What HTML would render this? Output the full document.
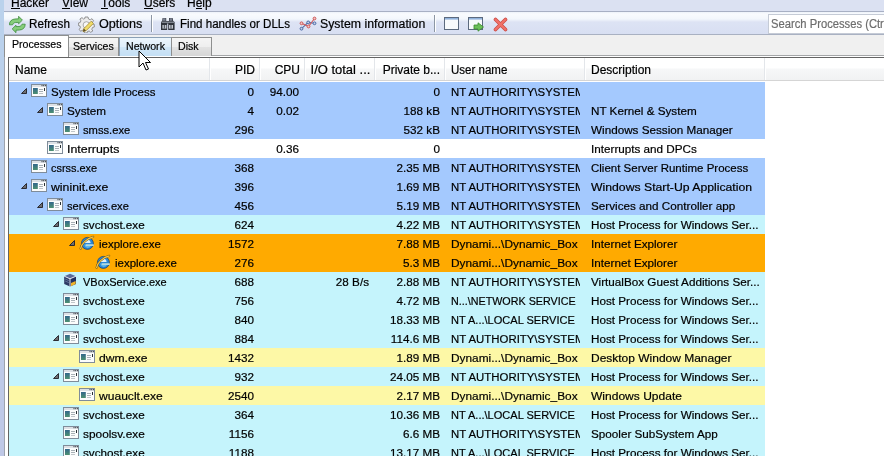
<!DOCTYPE html>
<html><head><meta charset="utf-8"><style>
*{margin:0;padding:0;box-sizing:border-box}
html,body{width:884px;height:456px;overflow:hidden;background:#f0f0f0;font-family:"Liberation Sans",sans-serif;color:#000}
.abs{position:absolute}
#frame{position:absolute;left:0;top:0;width:4px;height:456px;background:linear-gradient(#bad2ec,#bcd0ec 30%,#bfc8e6)}
#menubar{position:absolute;left:4px;top:0;width:880px;height:11px;background:#dbe1f2}
#menubar span{position:absolute;top:-4px;font-size:12px;line-height:14px;color:#000;white-space:nowrap}
#menubar u{text-decoration:none;position:relative}
#menubar u:after{content:'';position:absolute;left:0;right:0;top:12px;height:1px;background:#000}
#tbline{position:absolute;left:4px;top:11px;width:880px;height:1px;background:#a8b0c4}
#toolbar{position:absolute;left:4px;top:12px;width:880px;height:22px;background:linear-gradient(#eef2f9 0px,#f9fbfe 2px,#f3f7fc 7px,#dde3f4 10px,#d8dff2 22px)}
#tbbot{position:absolute;left:4px;top:34px;width:880px;height:1px;background:#a9b1c2}
.tbt{position:absolute;top:17px;font-size:12px;line-height:14px;color:#000;white-space:nowrap}
.sep{position:absolute;top:15px;width:1px;height:17px;background:#8c96a4;box-shadow:1px 0 0 #fff}
#search{position:absolute;left:768px;top:14px;width:120px;height:20px;background:#fff;border:1px solid #c5cbd6;border-right:none}
#search span{position:absolute;left:2px;top:2px;font-size:12px;line-height:14px;color:#6d6d6d;white-space:nowrap;transform:scaleX(0.935);transform-origin:0 0}
#tabarea{position:absolute;left:4px;top:35px;width:880px;height:421px;background:#f0f0f0}
.tab{position:absolute;top:37px;height:19px;border:1px solid #8e8f8f;border-bottom:none;background:linear-gradient(#f5f5f5,#eeeeee 50%,#e2e2e2 51%,#d6d6d6);font-size:11px;line-height:14px}
.tab span{position:absolute;top:2px;white-space:nowrap;font-size:11.8px;transform:scaleX(0.9);transform-origin:0 0}
.tab.sel{top:35px;height:22px;background:#fff;z-index:3}
.tab.hov{background:linear-gradient(#ecf5fc,#dfeefa 50%,#d0e6f7 51%,#c4dff4);border-color:#8aa0b6}
#pageline{position:absolute;left:4px;top:55px;width:880px;height:1px;background:#a4a6a8}
#page{position:absolute;left:5px;top:56px;width:879px;height:400px;background:#fff}
#pageleft{position:absolute;left:4px;top:55px;width:1px;height:401px;background:#9ea4ae}
#lv{position:absolute;left:8px;top:57px;width:880px;height:400px;border-left:1px solid #646464;border-top:1px solid #646464;background:#fff}
#hdr{position:absolute;left:9px;top:58px;width:875px;height:23px;background:linear-gradient(#ffffff 0,#ffffff 10px,#f6f7f8 11px,#f1f2f3 22px);border-bottom:1px solid #d5d5d5}
.hs{position:absolute;top:58px;width:1px;height:22px;background:#e3e6ea;box-shadow:1px 0 0 #fff}
.ht{position:absolute;top:64px;font-size:12px;line-height:13px;white-space:nowrap;color:#000}
.row{position:absolute;left:9px;width:756px;height:19px}
.row .t{position:absolute;top:3px;font-size:11.7px;line-height:14px;white-space:nowrap;color:#000}
.row .t.user{width:129px;overflow:hidden}
.row .icw{position:absolute;line-height:0}
.exp{position:absolute;top:5px}
#cursor{position:absolute;left:138px;top:50px;z-index:10}
#root div,#menubar span{-webkit-text-stroke:0.2px currentColor}
#root{position:absolute;left:0;top:0;width:884px;height:456px;overflow:hidden;filter:blur(0.3px)}
</style></head>
<body>
<div id="root">
<svg width="0" height="0" style="position:absolute"><defs><linearGradient id="tg" x1="0" y1="0" x2="0" y2="1"><stop offset="0" stop-color="#33678c"/><stop offset="1" stop-color="#4c9070"/></linearGradient></defs></svg>
<div id="frame"></div>
<div id="menubar"><span style="left:7px"><u>H</u>acker</span><span style="left:58px"><u>V</u>iew</span><span style="left:97px"><u>T</u>ools</span><span style="left:140px"><u>U</u>sers</span><span style="left:183px">H<u>e</u>lp</span></div>
<div id="tbline"></div>
<div id="toolbar"></div>
<div id="tbbot"></div>
<svg class="abs" style="left:9px;top:16px" width="18" height="18" viewBox="0 0 18 18"><path d="M0.4 8.8 C0.4 5.2 2.8 3.2 6 3.0 L9.6 2.8 L9.6 0.3 L13.4 4.1 L9.6 7.8 L9.6 6.4 L6.6 6.5 C5 6.6 4.2 7.4 3.6 8.8 Z" fill="#86ce7a" stroke="#3e8c3c" stroke-width="0.8" stroke-linejoin="round"/><path d="M16.2 8.2 C16.2 11.8 13.8 13.8 10.6 14 L7 14.2 L7 16.7 L3.2 12.9 L7 9.2 L7 10.6 L10 10.5 C11.6 10.4 12.4 9.6 13 8.2 Z" fill="#86ce7a" stroke="#3e8c3c" stroke-width="0.8" stroke-linejoin="round"/></svg><div class="tbt" style="left:29px;transform:scaleX(0.975);transform-origin:0 0">Refresh</div>
<svg class="abs" style="left:78px;top:16px" width="17" height="17" viewBox="0 0 17 17"><path d="M7 1 H10 L10.5 3 L12.3 3.8 L14 2.7 L15.6 4.8 L14.2 6.3 L14.6 8 L16.3 8.5 V11 L14.5 11.5 L13.8 13.3 L14.8 15 L12.6 16.3 L11.2 15 L9.5 15.5 L9 17 H6.5 L6 15 L4.3 14.3 L2.6 15.3 L1.2 13.3 L2.4 11.8 L2 10 L0.4 9.5 V7 L2.2 6.5 L2.9 4.8 L1.9 3 L4 1.6 L5.5 3 L6.8 2.5 Z" fill="#ececec" stroke="#7e7e7e" stroke-width="0.8"/><circle cx="8.4" cy="9" r="3.3" fill="#f8f8f8" stroke="#8a8a8a" stroke-width="0.7"/><path d="M5 15.6 L5.8 12.6 L13.2 5.2 L15.4 7.4 L8 14.8 Z" fill="#f0dc6a" stroke="#9c8020" stroke-width="0.7" stroke-linejoin="round"/><path d="M5 15.6 L5.8 12.6 L8 14.8 Z" fill="#5a4a2a"/></svg><div class="tbt" style="left:99px;transform:scaleX(1.05);transform-origin:0 0">Options</div>
<div class="sep" style="left:151px"></div>
<svg class="abs" style="left:160px;top:17px" width="16" height="14" viewBox="0 0 16 14"><path d="M2.6 1 H6.2 V4 H9 V1 H12.6 L13.2 4 L14.6 5 V13 H8.2 V6.5 H7.2 V13 H1 V5 L2.2 4 Z" fill="#30343c"/><rect x="3" y="1.2" width="2.6" height="2.6" fill="#7a8090"/><rect x="9.6" y="1.2" width="2.6" height="2.6" fill="#7a8090"/><rect x="1.6" y="4.6" width="12.4" height="1.3" fill="#8a909a"/><rect x="2.4" y="8" width="4" height="3.6" fill="#c4c8d0"/><rect x="9" y="8" width="4" height="3.6" fill="#c4c8d0"/><rect x="3.8" y="8" width="1.2" height="3.6" fill="#5a606a"/><rect x="10.4" y="8" width="1.2" height="3.6" fill="#5a606a"/></svg><div class="tbt" style="left:180px;transform:scaleX(0.965);transform-origin:0 0">Find handles or DLLs</div>
<svg class="abs" style="left:299px;top:16px" width="18" height="15" viewBox="0 0 18 15"><path d="M2.5 12.7 L9.2 6.4 L15.5 7.3" stroke="#5070aa" stroke-width="1.1" fill="none"/><path d="M2.5 7.3 L9.5 10.5 L15.5 2.5" stroke="#d25c5c" stroke-width="1.1" fill="none"/><circle cx="2.5" cy="12.7" r="1.4" fill="#c8d4ea" stroke="#4a68a4" stroke-width="1"/><circle cx="9.2" cy="6.4" r="1.4" fill="#c8d4ea" stroke="#4a68a4" stroke-width="1"/><circle cx="15.5" cy="7.3" r="1.4" fill="#c8d4ea" stroke="#4a68a4" stroke-width="1"/><circle cx="2.5" cy="7.3" r="1.4" fill="#f0c8c8" stroke="#d05858" stroke-width="1"/><circle cx="9.5" cy="10.5" r="1.4" fill="#f0c8c8" stroke="#d05858" stroke-width="1"/><circle cx="15.5" cy="2.5" r="1.4" fill="#f0c8c8" stroke="#d05858" stroke-width="1"/></svg><div class="tbt" style="left:320px;transform:scaleX(1.025);transform-origin:0 0">System information</div>
<div class="sep" style="left:434px"></div>
<svg class="abs" style="left:444px;top:17px" width="16" height="14" viewBox="0 0 16 14"><rect x="0.5" y="0.5" width="14" height="12" fill="#f8fafc" stroke="#5c6a7e"/><rect x="1" y="1" width="13" height="1.6" fill="#90b2dc"/></svg><svg class="abs" style="left:468px;top:17px" width="17" height="16" viewBox="0 0 17 16"><rect x="0.5" y="0.5" width="14" height="12" fill="#f8fafc" stroke="#5c6a7e"/><rect x="1" y="1" width="13" height="1.6" fill="#90b2dc"/><path d="M6 8 H10 V5.8 L15.5 10 L10 14.2 V12 H6 Z" fill="#6cbf5a" stroke="#3a8a2c" stroke-width="0.8" stroke-linejoin="round"/></svg><svg class="abs" style="left:493px;top:17px" width="15" height="15" viewBox="0 0 15 15"><path d="M2.5 2.5 L12.5 12.5 M12.5 2.5 L2.5 12.5" stroke="#c84a44" stroke-width="3.6" stroke-linecap="round"/><path d="M2.5 2.5 L12.5 12.5 M12.5 2.5 L2.5 12.5" stroke="#f07068" stroke-width="2.4" stroke-linecap="round"/></svg>
<div id="search"><span>Search Processes (Ctrl+K)</span></div>
<div id="tabarea"></div>
<div id="pageline"></div>
<div id="page"></div><div id="pageleft"></div>
<div class="tab sel" style="left:4px;width:65px"><span style="left:7px;top:1px">Processes</span></div><div class="tab" style="left:68px;width:51px"><span style="left:4px;top:1px">Services</span></div><div class="tab hov" style="left:119px;width:53px"><span style="left:6px;top:1px">Network</span></div><div class="tab" style="left:171px;width:41px"><span style="left:6px;top:1px">Disk</span></div>
<div id="lv"></div>
<div id="hdr"></div>
<div class="hs" style="left:209px"></div><div class="hs" style="left:259px"></div><div class="hs" style="left:304px"></div><div class="hs" style="left:374px"></div><div class="hs" style="left:444px"></div><div class="hs" style="left:584px"></div><div class="hs" style="left:764px"></div>
<div class="ht" style="left:15px">Name</div><div class="ht" style="right:629px">PID</div><div class="ht" style="right:584px">CPU</div><div class="ht" style="right:514px;transform:scaleX(1.08);transform-origin:100% 0">I/O total ...</div><div class="ht" style="right:444px">Private b...</div><div class="ht" style="left:451px;transform:scaleX(0.96);transform-origin:0 0">User name</div><div class="ht" style="left:591px">Description</div>
<div class="row" style="top:82px;background:#a4c9fe"><svg class="exp" style="left:11px" width="8" height="8" viewBox="0 0 8 8"><path d="M6.5 1.5 L6.5 6.5 L1.5 6.5 Z" fill="#6e6e72" stroke="#26262c" stroke-width="0.95" stroke-linejoin="round"/></svg><div class="icw" style="left:22px;top:2px"><svg class="ic" width="16" height="14" viewBox="0 0 16 14"><rect x="0.5" y="0.5" width="15" height="12" fill="#fbfcfc" stroke="#7f8c9a"/><rect x="1" y="1" width="14" height="2" fill="#dde1e6"/><rect x="10.5" y="1" width="1" height="1.2" fill="#40464c"/><rect x="12.2" y="1" width="1" height="1.2" fill="#40464c"/><rect x="13.9" y="1" width="1" height="1.2" fill="#40464c"/><rect x="2" y="4" width="4.8" height="6" fill="url(#tg)"/><rect x="8" y="5" width="4" height="1" fill="#a8b0b6"/><rect x="8" y="7" width="4" height="1" fill="#a8b0b6"/><rect x="8" y="9" width="4" height="1" fill="#c0c6ca"/><rect x="13" y="4" width="1" height="3" fill="#2a3236"/></svg></div><div class="t" style="left:42px;transform:scaleX(0.98);transform-origin:0 0">System Idle Process</div><div class="t r" style="right:511px">0</div><div class="t r" style="right:466px">94.00</div><div class="t r" style="right:325px">0</div><div class="t user" style="left:442px"><span style="display:inline-block;transform:scaleX(0.975);transform-origin:0 0">NT AUTHORITY\SYSTEM</span></div></div>
<div class="row" style="top:101px;background:#a4c9fe"><svg class="exp" style="left:27px" width="8" height="8" viewBox="0 0 8 8"><path d="M6.5 1.5 L6.5 6.5 L1.5 6.5 Z" fill="#6e6e72" stroke="#26262c" stroke-width="0.95" stroke-linejoin="round"/></svg><div class="icw" style="left:38px;top:2px"><svg class="ic" width="16" height="14" viewBox="0 0 16 14"><rect x="0.5" y="0.5" width="15" height="12" fill="#fbfcfc" stroke="#7f8c9a"/><rect x="1" y="1" width="14" height="2" fill="#dde1e6"/><rect x="10.5" y="1" width="1" height="1.2" fill="#40464c"/><rect x="12.2" y="1" width="1" height="1.2" fill="#40464c"/><rect x="13.9" y="1" width="1" height="1.2" fill="#40464c"/><rect x="2" y="4" width="4.8" height="6" fill="url(#tg)"/><rect x="8" y="5" width="4" height="1" fill="#a8b0b6"/><rect x="8" y="7" width="4" height="1" fill="#a8b0b6"/><rect x="8" y="9" width="4" height="1" fill="#c0c6ca"/><rect x="13" y="4" width="1" height="3" fill="#2a3236"/></svg></div><div class="t" style="left:58px;transform:scaleX(1.0);transform-origin:0 0">System</div><div class="t r" style="right:511px">4</div><div class="t r" style="right:466px">0.02</div><div class="t r" style="right:325px">188 kB</div><div class="t user" style="left:442px"><span style="display:inline-block;transform:scaleX(0.975);transform-origin:0 0">NT AUTHORITY\SYSTEM</span></div><div class="t" style="left:582px">NT Kernel &amp; System</div></div>
<div class="row" style="top:120px;background:#a4c9fe"><div class="icw" style="left:54px;top:2px"><svg class="ic" width="16" height="14" viewBox="0 0 16 14"><rect x="0.5" y="0.5" width="15" height="12" fill="#fbfcfc" stroke="#7f8c9a"/><rect x="1" y="1" width="14" height="2" fill="#dde1e6"/><rect x="10.5" y="1" width="1" height="1.2" fill="#40464c"/><rect x="12.2" y="1" width="1" height="1.2" fill="#40464c"/><rect x="13.9" y="1" width="1" height="1.2" fill="#40464c"/><rect x="2" y="4" width="4.8" height="6" fill="url(#tg)"/><rect x="8" y="5" width="4" height="1" fill="#a8b0b6"/><rect x="8" y="7" width="4" height="1" fill="#a8b0b6"/><rect x="8" y="9" width="4" height="1" fill="#c0c6ca"/><rect x="13" y="4" width="1" height="3" fill="#2a3236"/></svg></div><div class="t" style="left:74px;transform:scaleX(0.957);transform-origin:0 0">smss.exe</div><div class="t r" style="right:511px">296</div><div class="t r" style="right:325px">532 kB</div><div class="t user" style="left:442px"><span style="display:inline-block;transform:scaleX(0.975);transform-origin:0 0">NT AUTHORITY\SYSTEM</span></div><div class="t" style="left:582px">Windows Session Manager</div></div>
<div class="row" style="top:139px;background:#ffffff"><div class="icw" style="left:38px;top:2px"><svg class="ic" width="16" height="14" viewBox="0 0 16 14"><rect x="0.5" y="0.5" width="15" height="12" fill="#fbfcfc" stroke="#7f8c9a"/><rect x="1" y="1" width="14" height="2" fill="#dde1e6"/><rect x="10.5" y="1" width="1" height="1.2" fill="#40464c"/><rect x="12.2" y="1" width="1" height="1.2" fill="#40464c"/><rect x="13.9" y="1" width="1" height="1.2" fill="#40464c"/><rect x="2" y="4" width="4.8" height="6" fill="url(#tg)"/><rect x="8" y="5" width="4" height="1" fill="#a8b0b6"/><rect x="8" y="7" width="4" height="1" fill="#a8b0b6"/><rect x="8" y="9" width="4" height="1" fill="#c0c6ca"/><rect x="13" y="4" width="1" height="3" fill="#2a3236"/></svg></div><div class="t" style="left:58px;transform:scaleX(1.06);transform-origin:0 0">Interrupts</div><div class="t r" style="right:466px">0.36</div><div class="t r" style="right:325px">0</div><div class="t" style="left:582px">Interrupts and DPCs</div></div>
<div class="row" style="top:158px;background:#a4c9fe"><div class="icw" style="left:22px;top:2px"><svg class="ic" width="16" height="14" viewBox="0 0 16 14"><rect x="0.5" y="0.5" width="15" height="12" fill="#fbfcfc" stroke="#7f8c9a"/><rect x="1" y="1" width="14" height="2" fill="#dde1e6"/><rect x="10.5" y="1" width="1" height="1.2" fill="#40464c"/><rect x="12.2" y="1" width="1" height="1.2" fill="#40464c"/><rect x="13.9" y="1" width="1" height="1.2" fill="#40464c"/><rect x="2" y="4" width="4.8" height="6" fill="url(#tg)"/><rect x="8" y="5" width="4" height="1" fill="#a8b0b6"/><rect x="8" y="7" width="4" height="1" fill="#a8b0b6"/><rect x="8" y="9" width="4" height="1" fill="#c0c6ca"/><rect x="13" y="4" width="1" height="3" fill="#2a3236"/></svg></div><div class="t" style="left:42px;transform:scaleX(0.935);transform-origin:0 0">csrss.exe</div><div class="t r" style="right:511px">368</div><div class="t r" style="right:325px">2.35 MB</div><div class="t user" style="left:442px"><span style="display:inline-block;transform:scaleX(0.975);transform-origin:0 0">NT AUTHORITY\SYSTEM</span></div><div class="t" style="left:582px;transform:scaleX(0.984);transform-origin:0 0">Client Server Runtime Process</div></div>
<div class="row" style="top:177px;background:#a4c9fe"><svg class="exp" style="left:11px" width="8" height="8" viewBox="0 0 8 8"><path d="M6.5 1.5 L6.5 6.5 L1.5 6.5 Z" fill="#6e6e72" stroke="#26262c" stroke-width="0.95" stroke-linejoin="round"/></svg><div class="icw" style="left:22px;top:2px"><svg class="ic" width="16" height="14" viewBox="0 0 16 14"><rect x="0.5" y="0.5" width="15" height="12" fill="#fbfcfc" stroke="#7f8c9a"/><rect x="1" y="1" width="14" height="2" fill="#dde1e6"/><rect x="10.5" y="1" width="1" height="1.2" fill="#40464c"/><rect x="12.2" y="1" width="1" height="1.2" fill="#40464c"/><rect x="13.9" y="1" width="1" height="1.2" fill="#40464c"/><rect x="2" y="4" width="4.8" height="6" fill="url(#tg)"/><rect x="8" y="5" width="4" height="1" fill="#a8b0b6"/><rect x="8" y="7" width="4" height="1" fill="#a8b0b6"/><rect x="8" y="9" width="4" height="1" fill="#c0c6ca"/><rect x="13" y="4" width="1" height="3" fill="#2a3236"/></svg></div><div class="t" style="left:42px;transform:scaleX(1.05);transform-origin:0 0">wininit.exe</div><div class="t r" style="right:511px">396</div><div class="t r" style="right:325px">1.69 MB</div><div class="t user" style="left:442px"><span style="display:inline-block;transform:scaleX(0.975);transform-origin:0 0">NT AUTHORITY\SYSTEM</span></div><div class="t" style="left:582px;transform:scaleX(1.046);transform-origin:0 0">Windows Start-Up Application</div></div>
<div class="row" style="top:196px;background:#a4c9fe"><svg class="exp" style="left:27px" width="8" height="8" viewBox="0 0 8 8"><path d="M6.5 1.5 L6.5 6.5 L1.5 6.5 Z" fill="#6e6e72" stroke="#26262c" stroke-width="0.95" stroke-linejoin="round"/></svg><div class="icw" style="left:38px;top:2px"><svg class="ic" width="16" height="14" viewBox="0 0 16 14"><rect x="0.5" y="0.5" width="15" height="12" fill="#fbfcfc" stroke="#7f8c9a"/><rect x="1" y="1" width="14" height="2" fill="#dde1e6"/><rect x="10.5" y="1" width="1" height="1.2" fill="#40464c"/><rect x="12.2" y="1" width="1" height="1.2" fill="#40464c"/><rect x="13.9" y="1" width="1" height="1.2" fill="#40464c"/><rect x="2" y="4" width="4.8" height="6" fill="url(#tg)"/><rect x="8" y="5" width="4" height="1" fill="#a8b0b6"/><rect x="8" y="7" width="4" height="1" fill="#a8b0b6"/><rect x="8" y="9" width="4" height="1" fill="#c0c6ca"/><rect x="13" y="4" width="1" height="3" fill="#2a3236"/></svg></div><div class="t" style="left:58px;transform:scaleX(0.952);transform-origin:0 0">services.exe</div><div class="t r" style="right:511px">456</div><div class="t r" style="right:325px">5.19 MB</div><div class="t user" style="left:442px"><span style="display:inline-block;transform:scaleX(0.975);transform-origin:0 0">NT AUTHORITY\SYSTEM</span></div><div class="t" style="left:582px">Services and Controller app</div></div>
<div class="row" style="top:215px;background:#c5f4fc"><svg class="exp" style="left:43px" width="8" height="8" viewBox="0 0 8 8"><path d="M6.5 1.5 L6.5 6.5 L1.5 6.5 Z" fill="#6e6e72" stroke="#26262c" stroke-width="0.95" stroke-linejoin="round"/></svg><div class="icw" style="left:54px;top:2px"><svg class="ic" width="16" height="14" viewBox="0 0 16 14"><rect x="0.5" y="0.5" width="15" height="12" fill="#fbfcfc" stroke="#7f8c9a"/><rect x="1" y="1" width="14" height="2" fill="#dde1e6"/><rect x="10.5" y="1" width="1" height="1.2" fill="#40464c"/><rect x="12.2" y="1" width="1" height="1.2" fill="#40464c"/><rect x="13.9" y="1" width="1" height="1.2" fill="#40464c"/><rect x="2" y="4" width="4.8" height="6" fill="url(#tg)"/><rect x="8" y="5" width="4" height="1" fill="#a8b0b6"/><rect x="8" y="7" width="4" height="1" fill="#a8b0b6"/><rect x="8" y="9" width="4" height="1" fill="#c0c6ca"/><rect x="13" y="4" width="1" height="3" fill="#2a3236"/></svg></div><div class="t" style="left:74px;transform:scaleX(1.0);transform-origin:0 0">svchost.exe</div><div class="t r" style="right:511px">624</div><div class="t r" style="right:325px">4.22 MB</div><div class="t user" style="left:442px"><span style="display:inline-block;transform:scaleX(0.975);transform-origin:0 0">NT AUTHORITY\SYSTEM</span></div><div class="t" style="left:582px">Host Process for Windows Ser...</div></div>
<div class="row" style="top:234px;background:#ffaa00"><svg class="exp" style="left:59px" width="8" height="8" viewBox="0 0 8 8"><path d="M6.5 1.5 L6.5 6.5 L1.5 6.5 Z" fill="#6e6e72" stroke="#26262c" stroke-width="0.95" stroke-linejoin="round"/></svg><div class="icw" style="left:70px;top:1px"><svg class="ic" width="16" height="16" viewBox="0 0 16 16"><circle cx="8.4" cy="8.4" r="6" fill="#2a88d8" stroke="#123c6c" stroke-width="0.7"/><path d="M5.3 7.9 C5.5 5.8 6.8 4.7 8.5 4.7 C10.2 4.7 11.4 5.8 11.6 7.9 Z" fill="#dff0f8"/><path d="M5.4 9.6 L14.6 9.6 L14.6 11 L11.6 11 C11 12.4 9.8 12.9 8.6 12.9 C7 12.9 5.8 11.8 5.4 9.6 Z" fill="#5cb8ee"/><rect x="6.8" y="9.5" width="8" height="1.1" fill="#e8eed8"/><path d="M1.6 13.6 C2.2 9 7.6 3.4 14.2 1.8" stroke="#6a5018" stroke-width="2.1" fill="none" stroke-linecap="round"/><path d="M1.6 13.6 C2.2 9 7.6 3.4 14.2 1.8" stroke="#f4c848" stroke-width="1.2" fill="none" stroke-linecap="round"/></svg></div><div class="t" style="left:90px;transform:scaleX(0.98);transform-origin:0 0">iexplore.exe</div><div class="t r" style="right:511px">1572</div><div class="t r" style="right:325px">7.88 MB</div><div class="t user" style="left:442px"><span style="display:inline-block;transform:scaleX(1.015);transform-origin:0 0">Dynami...\Dynamic_Box</span></div><div class="t" style="left:582px">Internet Explorer</div></div>
<div class="row" style="top:253px;background:#ffaa00"><div class="icw" style="left:86px;top:1px"><svg class="ic" width="16" height="16" viewBox="0 0 16 16"><circle cx="8.4" cy="8.4" r="6" fill="#2a88d8" stroke="#123c6c" stroke-width="0.7"/><path d="M5.3 7.9 C5.5 5.8 6.8 4.7 8.5 4.7 C10.2 4.7 11.4 5.8 11.6 7.9 Z" fill="#dff0f8"/><path d="M5.4 9.6 L14.6 9.6 L14.6 11 L11.6 11 C11 12.4 9.8 12.9 8.6 12.9 C7 12.9 5.8 11.8 5.4 9.6 Z" fill="#5cb8ee"/><rect x="6.8" y="9.5" width="8" height="1.1" fill="#e8eed8"/><path d="M1.6 13.6 C2.2 9 7.6 3.4 14.2 1.8" stroke="#6a5018" stroke-width="2.1" fill="none" stroke-linecap="round"/><path d="M1.6 13.6 C2.2 9 7.6 3.4 14.2 1.8" stroke="#f4c848" stroke-width="1.2" fill="none" stroke-linecap="round"/></svg></div><div class="t" style="left:106px;transform:scaleX(0.98);transform-origin:0 0">iexplore.exe</div><div class="t r" style="right:511px">276</div><div class="t r" style="right:325px">5.3 MB</div><div class="t user" style="left:442px"><span style="display:inline-block;transform:scaleX(1.015);transform-origin:0 0">Dynami...\Dynamic_Box</span></div><div class="t" style="left:582px">Internet Explorer</div></div>
<div class="row" style="top:272px;background:#c5f4fc"><div class="icw" style="left:54px;top:1px"><svg class="ic" width="16" height="16" viewBox="0 0 16 16"><path d="M7 0.8 L13 3.2 L7 5.8 L1.2 3.2 Z" fill="#5b6b9a"/><path d="M1.2 3.2 L7 5.8 L7 13.6 L1.2 11 Z" fill="#2c3a64"/><path d="M7 5.8 L13 3.2 L13 11 L7 13.6 Z" fill="#223060"/><path d="M8 10 L12.6 8 L12.6 11 L8 13.2 Z" fill="#f0b428"/><path d="M1.2 3.2 L7 5.8 L13 3.2 M7 5.8 L7 13.6" stroke="#eef2fa" stroke-width="0.9" fill="none"/><path d="M2.2 6 L5.8 7.6 M2.2 8 L5.8 9.6" stroke="#8898c0" stroke-width="0.6" fill="none"/></svg></div><div class="t" style="left:74px;transform:scaleX(0.94);transform-origin:0 0">VBoxService.exe</div><div class="t r" style="right:511px">688</div><div class="t r" style="right:396px">28 B/s</div><div class="t r" style="right:325px">2.88 MB</div><div class="t user" style="left:442px"><span style="display:inline-block;transform:scaleX(0.975);transform-origin:0 0">NT AUTHORITY\SYSTEM</span></div><div class="t" style="left:582px">VirtualBox Guest Additions Ser...</div></div>
<div class="row" style="top:291px;background:#c5f4fc"><div class="icw" style="left:54px;top:2px"><svg class="ic" width="16" height="14" viewBox="0 0 16 14"><rect x="0.5" y="0.5" width="15" height="12" fill="#fbfcfc" stroke="#7f8c9a"/><rect x="1" y="1" width="14" height="2" fill="#dde1e6"/><rect x="10.5" y="1" width="1" height="1.2" fill="#40464c"/><rect x="12.2" y="1" width="1" height="1.2" fill="#40464c"/><rect x="13.9" y="1" width="1" height="1.2" fill="#40464c"/><rect x="2" y="4" width="4.8" height="6" fill="url(#tg)"/><rect x="8" y="5" width="4" height="1" fill="#a8b0b6"/><rect x="8" y="7" width="4" height="1" fill="#a8b0b6"/><rect x="8" y="9" width="4" height="1" fill="#c0c6ca"/><rect x="13" y="4" width="1" height="3" fill="#2a3236"/></svg></div><div class="t" style="left:74px;transform:scaleX(1.0);transform-origin:0 0">svchost.exe</div><div class="t r" style="right:511px">756</div><div class="t r" style="right:325px">4.72 MB</div><div class="t user" style="left:442px"><span style="display:inline-block;transform:scaleX(0.92);transform-origin:0 0">N...\NETWORK SERVICE</span></div><div class="t" style="left:582px">Host Process for Windows Ser...</div></div>
<div class="row" style="top:310px;background:#c5f4fc"><div class="icw" style="left:54px;top:2px"><svg class="ic" width="16" height="14" viewBox="0 0 16 14"><rect x="0.5" y="0.5" width="15" height="12" fill="#fbfcfc" stroke="#7f8c9a"/><rect x="1" y="1" width="14" height="2" fill="#dde1e6"/><rect x="10.5" y="1" width="1" height="1.2" fill="#40464c"/><rect x="12.2" y="1" width="1" height="1.2" fill="#40464c"/><rect x="13.9" y="1" width="1" height="1.2" fill="#40464c"/><rect x="2" y="4" width="4.8" height="6" fill="url(#tg)"/><rect x="8" y="5" width="4" height="1" fill="#a8b0b6"/><rect x="8" y="7" width="4" height="1" fill="#a8b0b6"/><rect x="8" y="9" width="4" height="1" fill="#c0c6ca"/><rect x="13" y="4" width="1" height="3" fill="#2a3236"/></svg></div><div class="t" style="left:74px;transform:scaleX(1.0);transform-origin:0 0">svchost.exe</div><div class="t r" style="right:511px">840</div><div class="t r" style="right:325px">18.33 MB</div><div class="t user" style="left:442px"><span style="display:inline-block;transform:scaleX(0.945);transform-origin:0 0">NT A...\LOCAL SERVICE</span></div><div class="t" style="left:582px">Host Process for Windows Ser...</div></div>
<div class="row" style="top:329px;background:#c5f4fc"><svg class="exp" style="left:43px" width="8" height="8" viewBox="0 0 8 8"><path d="M6.5 1.5 L6.5 6.5 L1.5 6.5 Z" fill="#6e6e72" stroke="#26262c" stroke-width="0.95" stroke-linejoin="round"/></svg><div class="icw" style="left:54px;top:2px"><svg class="ic" width="16" height="14" viewBox="0 0 16 14"><rect x="0.5" y="0.5" width="15" height="12" fill="#fbfcfc" stroke="#7f8c9a"/><rect x="1" y="1" width="14" height="2" fill="#dde1e6"/><rect x="10.5" y="1" width="1" height="1.2" fill="#40464c"/><rect x="12.2" y="1" width="1" height="1.2" fill="#40464c"/><rect x="13.9" y="1" width="1" height="1.2" fill="#40464c"/><rect x="2" y="4" width="4.8" height="6" fill="url(#tg)"/><rect x="8" y="5" width="4" height="1" fill="#a8b0b6"/><rect x="8" y="7" width="4" height="1" fill="#a8b0b6"/><rect x="8" y="9" width="4" height="1" fill="#c0c6ca"/><rect x="13" y="4" width="1" height="3" fill="#2a3236"/></svg></div><div class="t" style="left:74px;transform:scaleX(1.0);transform-origin:0 0">svchost.exe</div><div class="t r" style="right:511px">884</div><div class="t r" style="right:325px">114.6 MB</div><div class="t user" style="left:442px"><span style="display:inline-block;transform:scaleX(0.975);transform-origin:0 0">NT AUTHORITY\SYSTEM</span></div><div class="t" style="left:582px">Host Process for Windows Ser...</div></div>
<div class="row" style="top:348px;background:#fdf8a6"><div class="icw" style="left:70px;top:2px"><svg class="ic" width="16" height="14" viewBox="0 0 16 14"><rect x="0.5" y="0.5" width="15" height="12" fill="#fbfcfc" stroke="#7f8c9a"/><rect x="1" y="1" width="14" height="2" fill="#dde1e6"/><rect x="10.5" y="1" width="1" height="1.2" fill="#40464c"/><rect x="12.2" y="1" width="1" height="1.2" fill="#40464c"/><rect x="13.9" y="1" width="1" height="1.2" fill="#40464c"/><rect x="2" y="4" width="4.8" height="6" fill="url(#tg)"/><rect x="8" y="5" width="4" height="1" fill="#a8b0b6"/><rect x="8" y="7" width="4" height="1" fill="#a8b0b6"/><rect x="8" y="9" width="4" height="1" fill="#c0c6ca"/><rect x="13" y="4" width="1" height="3" fill="#2a3236"/></svg></div><div class="t" style="left:90px;transform:scaleX(1.036);transform-origin:0 0">dwm.exe</div><div class="t r" style="right:511px">1432</div><div class="t r" style="right:325px">1.89 MB</div><div class="t user" style="left:442px"><span style="display:inline-block;transform:scaleX(1.015);transform-origin:0 0">Dynami...\Dynamic_Box</span></div><div class="t" style="left:582px;transform:scaleX(1.025);transform-origin:0 0">Desktop Window Manager</div></div>
<div class="row" style="top:367px;background:#c5f4fc"><svg class="exp" style="left:43px" width="8" height="8" viewBox="0 0 8 8"><path d="M6.5 1.5 L6.5 6.5 L1.5 6.5 Z" fill="#6e6e72" stroke="#26262c" stroke-width="0.95" stroke-linejoin="round"/></svg><div class="icw" style="left:54px;top:2px"><svg class="ic" width="16" height="14" viewBox="0 0 16 14"><rect x="0.5" y="0.5" width="15" height="12" fill="#fbfcfc" stroke="#7f8c9a"/><rect x="1" y="1" width="14" height="2" fill="#dde1e6"/><rect x="10.5" y="1" width="1" height="1.2" fill="#40464c"/><rect x="12.2" y="1" width="1" height="1.2" fill="#40464c"/><rect x="13.9" y="1" width="1" height="1.2" fill="#40464c"/><rect x="2" y="4" width="4.8" height="6" fill="url(#tg)"/><rect x="8" y="5" width="4" height="1" fill="#a8b0b6"/><rect x="8" y="7" width="4" height="1" fill="#a8b0b6"/><rect x="8" y="9" width="4" height="1" fill="#c0c6ca"/><rect x="13" y="4" width="1" height="3" fill="#2a3236"/></svg></div><div class="t" style="left:74px;transform:scaleX(1.0);transform-origin:0 0">svchost.exe</div><div class="t r" style="right:511px">932</div><div class="t r" style="right:325px">24.05 MB</div><div class="t user" style="left:442px"><span style="display:inline-block;transform:scaleX(0.975);transform-origin:0 0">NT AUTHORITY\SYSTEM</span></div><div class="t" style="left:582px">Host Process for Windows Ser...</div></div>
<div class="row" style="top:386px;background:#fdf8a6"><div class="icw" style="left:70px;top:2px"><svg class="ic" width="16" height="14" viewBox="0 0 16 14"><rect x="0.5" y="0.5" width="15" height="12" fill="#fbfcfc" stroke="#7f8c9a"/><rect x="1" y="1" width="14" height="2" fill="#dde1e6"/><rect x="10.5" y="1" width="1" height="1.2" fill="#40464c"/><rect x="12.2" y="1" width="1" height="1.2" fill="#40464c"/><rect x="13.9" y="1" width="1" height="1.2" fill="#40464c"/><rect x="2" y="4" width="4.8" height="6" fill="url(#tg)"/><rect x="8" y="5" width="4" height="1" fill="#a8b0b6"/><rect x="8" y="7" width="4" height="1" fill="#a8b0b6"/><rect x="8" y="9" width="4" height="1" fill="#c0c6ca"/><rect x="13" y="4" width="1" height="3" fill="#2a3236"/></svg></div><div class="t" style="left:90px;transform:scaleX(1.033);transform-origin:0 0">wuauclt.exe</div><div class="t r" style="right:511px">2540</div><div class="t r" style="right:325px">2.17 MB</div><div class="t user" style="left:442px"><span style="display:inline-block;transform:scaleX(1.015);transform-origin:0 0">Dynami...\Dynamic_Box</span></div><div class="t" style="left:582px;transform:scaleX(1.03);transform-origin:0 0">Windows Update</div></div>
<div class="row" style="top:405px;background:#c5f4fc"><div class="icw" style="left:54px;top:2px"><svg class="ic" width="16" height="14" viewBox="0 0 16 14"><rect x="0.5" y="0.5" width="15" height="12" fill="#fbfcfc" stroke="#7f8c9a"/><rect x="1" y="1" width="14" height="2" fill="#dde1e6"/><rect x="10.5" y="1" width="1" height="1.2" fill="#40464c"/><rect x="12.2" y="1" width="1" height="1.2" fill="#40464c"/><rect x="13.9" y="1" width="1" height="1.2" fill="#40464c"/><rect x="2" y="4" width="4.8" height="6" fill="url(#tg)"/><rect x="8" y="5" width="4" height="1" fill="#a8b0b6"/><rect x="8" y="7" width="4" height="1" fill="#a8b0b6"/><rect x="8" y="9" width="4" height="1" fill="#c0c6ca"/><rect x="13" y="4" width="1" height="3" fill="#2a3236"/></svg></div><div class="t" style="left:74px;transform:scaleX(1.0);transform-origin:0 0">svchost.exe</div><div class="t r" style="right:511px">364</div><div class="t r" style="right:325px">10.36 MB</div><div class="t user" style="left:442px"><span style="display:inline-block;transform:scaleX(0.945);transform-origin:0 0">NT A...\LOCAL SERVICE</span></div><div class="t" style="left:582px">Host Process for Windows Ser...</div></div>
<div class="row" style="top:424px;background:#c5f4fc"><div class="icw" style="left:54px;top:2px"><svg class="ic" width="16" height="14" viewBox="0 0 16 14"><rect x="0.5" y="0.5" width="15" height="12" fill="#fbfcfc" stroke="#7f8c9a"/><rect x="1" y="1" width="14" height="2" fill="#dde1e6"/><rect x="10.5" y="1" width="1" height="1.2" fill="#40464c"/><rect x="12.2" y="1" width="1" height="1.2" fill="#40464c"/><rect x="13.9" y="1" width="1" height="1.2" fill="#40464c"/><rect x="2" y="4" width="4.8" height="6" fill="url(#tg)"/><rect x="8" y="5" width="4" height="1" fill="#a8b0b6"/><rect x="8" y="7" width="4" height="1" fill="#a8b0b6"/><rect x="8" y="9" width="4" height="1" fill="#c0c6ca"/><rect x="13" y="4" width="1" height="3" fill="#2a3236"/></svg></div><div class="t" style="left:74px;transform:scaleX(1.015);transform-origin:0 0">spoolsv.exe</div><div class="t r" style="right:511px">1156</div><div class="t r" style="right:325px">6.6 MB</div><div class="t user" style="left:442px"><span style="display:inline-block;transform:scaleX(0.975);transform-origin:0 0">NT AUTHORITY\SYSTEM</span></div><div class="t" style="left:582px">Spooler SubSystem App</div></div>
<div class="row" style="top:443px;background:#c5f4fc"><div class="icw" style="left:54px;top:2px"><svg class="ic" width="16" height="14" viewBox="0 0 16 14"><rect x="0.5" y="0.5" width="15" height="12" fill="#fbfcfc" stroke="#7f8c9a"/><rect x="1" y="1" width="14" height="2" fill="#dde1e6"/><rect x="10.5" y="1" width="1" height="1.2" fill="#40464c"/><rect x="12.2" y="1" width="1" height="1.2" fill="#40464c"/><rect x="13.9" y="1" width="1" height="1.2" fill="#40464c"/><rect x="2" y="4" width="4.8" height="6" fill="url(#tg)"/><rect x="8" y="5" width="4" height="1" fill="#a8b0b6"/><rect x="8" y="7" width="4" height="1" fill="#a8b0b6"/><rect x="8" y="9" width="4" height="1" fill="#c0c6ca"/><rect x="13" y="4" width="1" height="3" fill="#2a3236"/></svg></div><div class="t" style="left:74px;transform:scaleX(1.0);transform-origin:0 0">svchost.exe</div><div class="t r" style="right:511px">1188</div><div class="t r" style="right:325px">13.17 MB</div><div class="t user" style="left:442px"><span style="display:inline-block;transform:scaleX(0.945);transform-origin:0 0">NT A...\LOCAL SERVICE</span></div><div class="t" style="left:582px">Host Process for Windows Ser...</div></div>
<svg id="cursor" width="16" height="22" viewBox="0 0 16 22"><path d="M1 1 L1 17 L5 13 L8 20 L10.5 19 L7.5 12.5 L12.5 12.5 Z" fill="#fff" stroke="#000" stroke-width="1"/></svg>
</div>
</body></html>
